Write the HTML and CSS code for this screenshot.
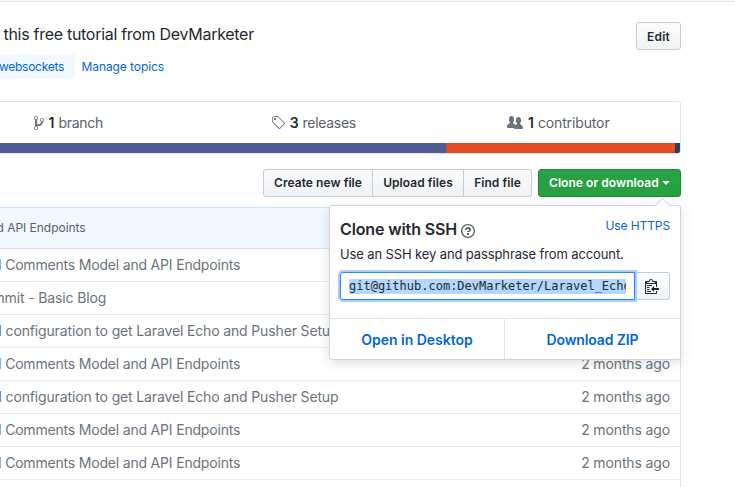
FILE: index.html
```
<!DOCTYPE html>
<html lang="en">
<head>
<meta charset="utf-8">
<title>DevMarketer/Laravel_Echo</title>
<link rel="stylesheet" href="styles.css">
</head>
<body>
<div class="tab-edge"></div>
<main class="repo">
  <header class="about">
    <div>
      <p class="description">this free tutorial from DevMarketer</p>
      <div class="topics"><a class="topic">websockets</a><a class="manage">Manage topics</a></div>
    </div>
    <button class="btn edit">Edit</button>
  </header>

  <section class="summary">
    <ul class="numbers">
      <li>
        <svg width="10" height="16" viewBox="0 0 10 16"><path fill-rule="evenodd" d="M10 5c0-1.11-.89-2-2-2a1.993 1.993 0 0 0-1 3.72v.3c-.02.52-.23.98-.63 1.38-.4.4-.86.61-1.38.63-.83.02-1.48.16-2 .45V4.72a1.993 1.993 0 0 0-1-3.72C.88 1 0 1.89 0 3a2 2 0 0 0 1 1.72v6.56c-.59.35-1 .99-1 1.72 0 1.11.89 2 2 2 1.11 0 2-.89 2-2 0-.53-.2-1-.53-1.36.09-.06.48-.41.59-.47.25-.11.56-.17.94-.17 1.05-.05 1.95-.45 2.75-1.25S8.95 7.77 9 6.73h-.02C9.59 6.37 10 5.73 10 5zM2 1.8c.66 0 1.2.55 1.2 1.2 0 .65-.55 1.2-1.2 1.2C1.35 4.2.8 3.65.8 3c0-.65.55-1.2 1.2-1.2zm0 12.41c-.66 0-1.2-.55-1.2-1.2 0-.65.55-1.2 1.2-1.2.65 0 1.2.55 1.2 1.2 0 .65-.55 1.2-1.2 1.2zm6-8c-.66 0-1.2-.55-1.2-1.2 0-.65.55-1.2 1.2-1.2.65 0 1.2.55 1.2 1.2 0 .65-.55 1.2-1.2 1.2z"/></svg>
        <b>1</b><span class="branch">branch</span>
      </li>
      <li>
        <svg width="14" height="16" viewBox="0 0 14 16"><path fill-rule="evenodd" d="M7.685 1.72a2.49 2.49 0 0 0-1.76-.726H3.48A2.5 2.5 0 0 0 .994 3.48v2.456c0 .656.269 1.292.726 1.76l6.024 6.024a.99.99 0 0 0 1.402 0l4.563-4.563a.99.99 0 0 0 0-1.402L7.685 1.72zM2.366 7.048a1.54 1.54 0 0 1-.467-1.123V3.48c0-.874.716-1.58 1.58-1.58h2.456c.418 0 .825.159 1.123.467l6.104 6.094-4.702 4.702-6.094-6.114zm.626-4.066h1.989v1.989H2.982V2.982z"/></svg>
        <b>3</b><span class="releases">releases</span>
      </li>
      <li>
        <svg width="16" height="16" viewBox="0 0 16 16"><path fill-rule="evenodd" d="M16 12.999c0 .439-.45 1-1 1H7.995c-.539 0-.994-.447-.995-.999H1c-.54 0-1-.561-1-1 0-2.634 3-4 3-4s.229-.409 0-1c-.841-.621-1.058-.59-1-3 .058-2.419 1.367-3 2.5-3s2.442.58 2.5 3c.058 2.41-.159 2.379-1 3-.229.59 0 1 0 1s1.549.711 2.42 2.088C9.196 9.369 10 8.999 10 8.999s.229-.409 0-1c-.841-.62-1.058-.59-1-3 .058-2.419 1.367-3 2.5-3s2.437.581 2.495 3c.059 2.41-.158 2.38-1 3-.229.59 0 1 0 1s3.005 1.366 3.005 4z"/></svg>
        <b>1</b><span class="contributor">contributor</span>
      </li>
    </ul>
    <div class="languages"><i class="php"></i><i class="html"></i><i class="other"></i></div>
  </section>

  <nav class="actions">
    <div class="group"><button class="btn create">Create new file</button><button class="btn upload">Upload files</button><button class="btn find">Find file</button></div>
    <div class="clone">
      <button class="btn primary">Clone or download<i class="caret"></i></button>
      <div class="popover">
        <div class="popover-body">
          <div class="popover-head">
            <h4>Clone with SSH</h4>
            <svg class="help" width="14" height="16" viewBox="0 0 14 16"><path fill-rule="evenodd" d="M6 10h2v2H6v-2zm4-3.5C10 8.64 8 9 8 9H6c0-.55.45-1 1-1h.5c.28 0 .5-.22.5-.5v-1c0-.28-.22-.5-.5-.5h-1c-.28 0-.5.22-.5.5V7H4c0-1.5 1.5-3 3-3s3 1 3 2.5zM7 2.3c3.14 0 5.7 2.56 5.7 5.7s-2.56 5.7-5.7 5.7A5.71 5.71 0 0 1 1.3 8c0-3.14 2.56-5.7 5.7-5.7zM7 1C3.14 1 0 4.14 0 8s3.14 7 7 7 7-3.14 7-7-3.14-7-7-7z"/></svg>
            <a class="https">Use HTTPS</a>
          </div>
          <p class="hint">Use an SSH key and passphrase from account.</p>
          <div class="url-row">
            <div class="url"><span>git@github.com:DevMarketer/Laravel_Echo</span></div>
            <button class="btn copy"><svg width="14" height="16" viewBox="0 0 14 16"><path fill-rule="evenodd" d="M2 13h4v1H2v-1zm5-6H2v1h5V7zm2 3V8l-3 3 3 3v-2h5v-2H9zM4.5 9H2v1h2.5V9zM2 12h2.5v-1H2v1zm9 1h1v2c-.02.28-.11.52-.3.7-.19.18-.42.28-.7.3H1c-.55 0-1-.45-1-1V4c0-.55.45-1 1-1h3c0-1.11.89-2 2-2 1.11 0 2 .89 2 2h3c.55 0 1 .45 1 1v5h-1V6H1v9h10v-2zM2 5h8c0-.55-.45-1-1-1H8c-.55 0-1-.45-1-1s-.45-1-1-1-1 .45-1 1-.45 1-1 1H3c-.55 0-1 .45-1 1z"/></svg></button>
          </div>
        </div>
        <div class="popover-foot"><a class="desktop">Open in Desktop</a><a class="zip">Download ZIP</a></div>
      </div>
    </div>
  </nav>

  <section class="files">
    <div class="commit"><span>d API Endpoints</span></div>
    <div class="row"><span class="msg">d Comments Model and API Endpoints</span></div>
    <div class="row"><span class="msg initial">mmit - Basic Blog</span></div>
    <div class="row"><span class="msg config">d configuration to get Laravel Echo and Pusher Setup</span></div>
    <div class="row"><span class="msg">d Comments Model and API Endpoints</span><span class="age">2 months ago</span></div>
    <div class="row"><span class="msg config">d configuration to get Laravel Echo and Pusher Setup</span><span class="age">2 months ago</span></div>
    <div class="row"><span class="msg">d Comments Model and API Endpoints</span><span class="age">2 months ago</span></div>
    <div class="row"><span class="msg">d Comments Model and API Endpoints</span><span class="age">2 months ago</span></div>
    <div class="row last"></div>
  </section>
</main>
</body>
</html>
```
FILE: styles.css
```
* { box-sizing: border-box; }
body {
  margin: 0;
  width: 735px;
  height: 487px;
  overflow: hidden;
  background: #fff;
  color: #24292e;
  font: 14px/21px Inter, "Liberation Sans", sans-serif;
  white-space: nowrap;
}
p, h4, ul { margin: 0; padding: 0; }
svg { display: block; fill: currentColor; flex: none; }
a { color: #0366d6; }

.tab-edge { height: 2px; background: #fafbfc; border-bottom: 1px solid #e1e4e8; }
.repo { width: 681px; }

.about { display: flex; justify-content: space-between; align-items: flex-start; height: 99px; padding-top: 20px; }
.description { margin: 0 0 9px 3.5px; padding-top: 1px; font-size: 16px; line-height: 22px; letter-spacing: -0.29px; }
.topics { display: flex; font-size: 12px; line-height: 25px; }
.topic { width: 75px; margin-right: 6.5px; background: #f1f8ff; border-radius: 0 3px 3px 0; letter-spacing: -0.28px; text-indent: -1px; }
.manage { letter-spacing: -0.08px; }

.btn {
  height: 28px;
  padding: 0 10px;
  border: 1px solid #c8cbcf;
  border-radius: 3px;
  background: linear-gradient(#fafbfc, #eff3f6);
  color: #24292e;
  font: 600 12px/24px Inter, "Liberation Sans", sans-serif;
  letter-spacing: 0.05px;
}
.edit { width: 45px; letter-spacing: 0.2px; padding-top: 1px; }

.summary { height: 53px; border: solid #dfe2e5; border-width: 1px 1px 1px 0; border-radius: 0 3px 3px 0; overflow: hidden; }
.numbers { display: flex; width: 735px; height: 41px; margin-left: -54px; list-style: none; color: #586069; }
.numbers li { flex: 1; display: flex; align-items: center; justify-content: center; padding-top: 2px; line-height: 19px; }
.numbers svg { margin-top: -1px; color: #6a737d; }
.numbers b, .numbers span { margin-top: -2px; }
.numbers b { margin-left: 4.5px; margin-right: 4px; font-weight: 600; color: #24292e; }
.branch { letter-spacing: -0.27px; }
.releases { letter-spacing: -0.3px; }
.contributor { letter-spacing: -0.13px; }
.languages { display: flex; height: 10px; }
.php { width: 446px; background: #4f5d95; }
.html { flex: 1; background: #e44b23; }
.other { width: 5px; background: #2c3e50; }

.actions { display: flex; justify-content: flex-end; gap: 6px; height: 53px; padding-top: 15px; }
.group { display: flex; }
.group .btn { border-radius: 0; }
.group .btn + .btn { border-left: 0; }
.group .btn:first-child { border-radius: 3px 0 0 3px; }
.group .btn:last-child { border-radius: 0 3px 3px 0; }
.create { width: 110px; }
.upload { width: 91px; }
.find { width: 68px; }
.clone { position: relative; }
.primary { display: flex; align-items: center; width: 143px; color: #fff; border-color: #22863a; background: linear-gradient(#28a245, #28a040); }
.caret { margin-left: 3px; border: 4px solid transparent; border-top-color: #fff; border-bottom: 0; }

.popover { position: absolute; top: 36px; right: 0; width: 352px; height: 155px; background: #fff; border: 1px solid #d2d5d8; border-radius: 3px; box-shadow: 0 3px 12px rgba(27, 31, 35, .15); z-index: 1; }
.popover::before { content: ""; position: absolute; top: -6px; right: 12px; width: 10px; height: 10px; background: #fff; border: solid #d5d8db; border-width: 1px 0 0 1px; transform: rotate(45deg); }
.popover-body { height: 112px; padding: 10px; }
.popover-head { display: flex; height: 28px; }
h4 { font-size: 16px; line-height: 27px; font-weight: 600; letter-spacing: -0.13px; }
.help { margin: 7px 0 0 4px; color: #586069; }
.https { margin-left: auto; font-size: 12px; line-height: 19px; letter-spacing: -0.1px; }
.hint { font-size: 13px; line-height: 21px; letter-spacing: -0.12px; }
.url-row { display: flex; margin-top: 7px; }
.url { position: relative; width: 295px; height: 28px; padding: 6px 8px; border: 1px solid #2188ff; border-radius: 3px 0 0 3px; box-shadow: 0 0 0 2px #a9cffa; font: 12px/15px "DejaVu Sans Mono", monospace; }
.url span { display: block; overflow: hidden; background: #b3d7ff; }
.copy { flex: 1; padding: 0 0 0 10px; border-left: 0; border-radius: 0 3px 3px 0; }
.popover-foot { display: flex; height: 41px; border-top: 1px solid #e1e4e8; font-weight: 600; line-height: 41px; text-align: center; }
.popover-foot a { flex: 1; }
.popover-foot .desktop { flex: 0 0 175px; border-right: 1px solid #e1e4e8; letter-spacing: -0.02px; }
.zip { letter-spacing: -0.12px; }

.files { border-right: 1px solid #dfe2e5; color: #6a737d; }
.commit { height: 42px; margin-right: -1px; border: solid #c8e1ff; border-width: 1px 1px 1px 0; background: #f1f8ff; color: #586069; font-size: 12px; line-height: 40px; letter-spacing: -0.03px; }
.commit span { margin-left: -3.5px; }
.row { display: flex; justify-content: space-between; height: 33px; padding-right: 10px; border-bottom: 1px solid #eaecef; line-height: 32px; }
.msg { margin-left: -7px; letter-spacing: -0.19px; }
.config { margin-left: -6.7px; letter-spacing: -0.145px; }
.initial { margin-left: -7.5px; letter-spacing: -0.14px; }
.age { letter-spacing: -0.13px; }
.last { height: 7px; border: 0; }
```
